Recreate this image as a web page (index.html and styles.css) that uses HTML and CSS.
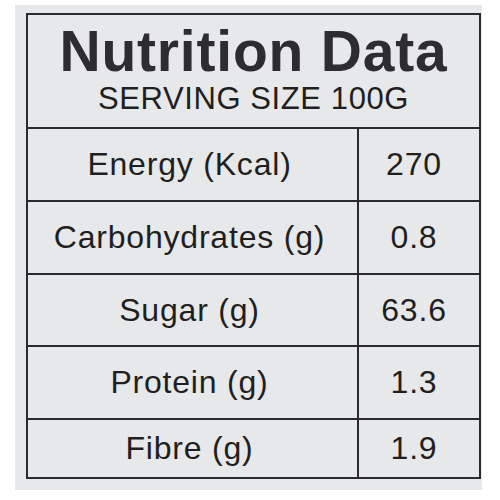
FILE: index.html
```html
<!DOCTYPE html>
<html>
<head>
    <title>Nutrition Data</title>
    <link rel="stylesheet" href="styles.css">
</head>
<body>
    <div class="label">
        <div class="panel">
            <div class="header">
                <h1 class="title">Nutrition Data</h1>
                <div class="serving">SERVING SIZE 100G</div>
            </div>
            <div class="row">
                <div class="name">Energy (Kcal)</div>
                <div class="value">270</div>
            </div>
            <div class="row">
                <div class="name">Carbohydrates (g)</div>
                <div class="value">0.8</div>
            </div>
            <div class="row short">
                <div class="name">Sugar (g)</div>
                <div class="value">63.6</div>
            </div>
            <div class="row">
                <div class="name">Protein (g)</div>
                <div class="value">1.3</div>
            </div>
            <div class="row last">
                <div class="name">Fibre (g)</div>
                <div class="value">1.9</div>
            </div>
        </div>
    </div>
</body>
</html>
```

FILE: styles.css
```css
body {
    margin: 0;
    background: #fff;
    font-family: 'Liberation Sans', Arial, sans-serif;
    color: #1f1f21;
}
.label {
    margin: 5px 0 0 15px;
    width: 467px;
    height: 485px;
    box-sizing: border-box;
    padding: 8px 1px 0 11px;
    background: #e7e8ea;
}
.panel {
    width: 455px;
    border: 2px solid #2a2a2c;
    box-sizing: border-box;
}
.header {
    height: 112px;
    padding-top: 8px;
    box-sizing: border-box;
    text-align: center;
}
.title {
    margin: 0;
    font-size: 57px;
    font-weight: bold;
    line-height: 57px;
    color: #2d2c30;
    letter-spacing: 0.8px;
}
.serving {
    margin-top: 3px;
    font-size: 31px;
    line-height: 31px;
    letter-spacing: 0.6px;
}
.row {
    display: grid;
    grid-template-columns: 329px 1fr;
    height: 73px;
    border-top: 2px solid #2a2a2c;
    box-sizing: border-box;
}
.row.short {
    height: 72px;
}
.row.last {
    height: 59px;
}
.name,
.value {
    display: flex;
    align-items: center;
    justify-content: center;
    font-size: 32px;
    letter-spacing: 0.8px;
}
.name {
    padding-right: 6px;
}
.value {
    border-left: 2px solid #2a2a2c;
    padding-right: 10px;
}
```
